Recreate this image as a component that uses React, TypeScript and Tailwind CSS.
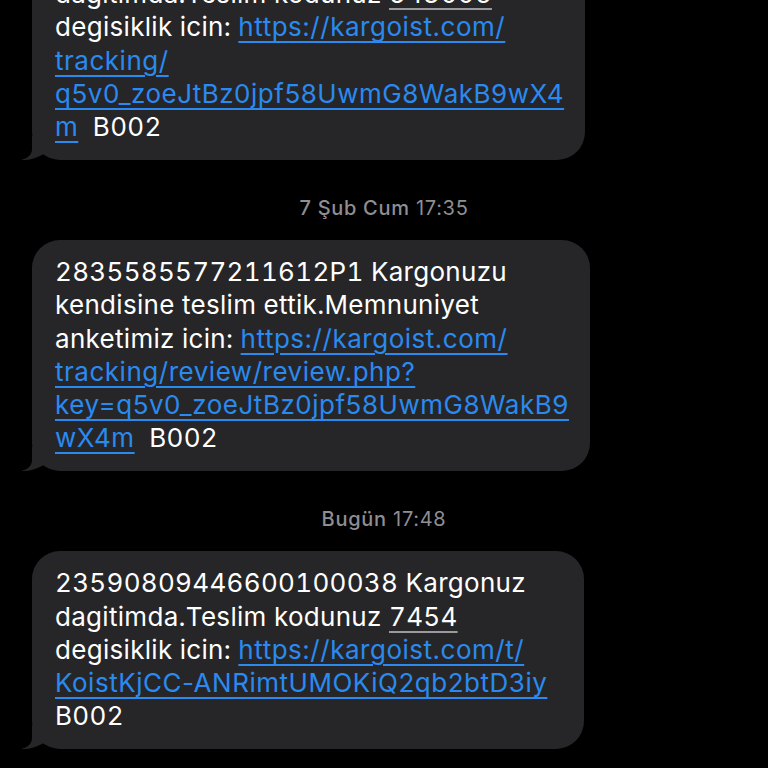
const font = { fontFamily: 'Inter, "Liberation Sans", sans-serif' };

type Seg = { t: string; kind?: 'link' | 'code' };
type Line = Seg[];

const Link = ({ children }: { children: React.ReactNode }) => (
  <span className="tracking-[0.52px] text-[#2a8af0] underline decoration-[#2a8af0] decoration-[2px] underline-offset-[5px]">
    {children}
  </span>
);

const Code = ({ children }: { children: React.ReactNode }) => (
  <span className="tabular-nums underline decoration-[#9a9a9e] decoration-[1.5px] underline-offset-[5px]">{children}</span>
);

function Tail() {
  return (
    <svg
      className="absolute left-[-11px] bottom-0"
      width="34"
      height="24"
      viewBox="0 0 34 24"
      fill="#262628"
    >
      <path d="M11 0 L11 13 C11 18.5 7 22.5 0 24 C8 24.5 15 22 22 18.4 L22 0 Z" />
    </svg>
  );
}

function Bubble({ lines, width, className = '' }: { lines: Line[]; width: string; className?: string }) {
  return (
    <div className={`relative ml-[32px] rounded-[28px] bg-[#262628] pl-[23px] pt-[15px] pb-[17px] ${width} ${className}`}>
      {lines.map((line, i) => (
        <div key={i} className="whitespace-pre text-[26px] leading-[33.2px] text-white tracking-[0.3px]">
          {line.map((s, j) =>
            s.kind === 'link' ? (
              <Link key={j}>{s.t}</Link>
            ) : s.kind === 'code' ? (
              <Code key={j}>{s.t}</Code>
            ) : (
              <span key={j} className="tabular-nums">{s.t}</span>
            )
          )}
        </div>
      ))}
      <Tail />
    </div>
  );
}

function Stamp({ day, time }: { day: string; time: string }) {
  return (
    <div className="mt-[36px] mb-[20px] text-center text-[20px] leading-[24px] tracking-[0.7px] text-[#8e8e93]">
      <span className="font-medium">{day}</span> <span>{time}</span>
    </div>
  );
}

export default function App() {
  return (
    <div className="h-[768px] w-[768px] overflow-hidden bg-black" style={font}>
      <Bubble
        className="-mt-[71px]"
        width="w-[553px]"
        lines={[
          [{ t: '23590809446600100038 Kargonuz' }],
          [{ t: 'dagitimda.Teslim kodunuz ' }, { t: '543006', kind: 'code' }],
          [{ t: 'degisiklik icin: ' }, { t: 'https://kargoist.com/', kind: 'link' }],
          [{ t: 'tracking/', kind: 'link' }],
          [{ t: 'q5v0_zoeJtBz0jpf58UwmG8WakB9wX4', kind: 'link' }],
          [{ t: 'm', kind: 'link' }, { t: '  B002' }],
        ]}
      />
      <Stamp day="7 Şub Cum" time="17:35" />
      <Bubble
        width="w-[558px]"
        lines={[
          [{ t: '2835585577211612P1 Kargonuzu' }],
          [{ t: 'kendisine teslim ettik.Memnuniyet' }],
          [{ t: 'anketimiz icin: ' }, { t: 'https://kargoist.com/', kind: 'link' }],
          [{ t: 'tracking/review/review.php?', kind: 'link' }],
          [{ t: 'key=q5v0_zoeJtBz0jpf58UwmG8WakB9', kind: 'link' }],
          [{ t: 'wX4m', kind: 'link' }, { t: '  B002' }],
        ]}
      />
      <Stamp day="Bugün" time="17:48" />
      <Bubble
        width="w-[552px]"
        lines={[
          [{ t: '23590809446600100038 Kargonuz' }],
          [{ t: 'dagitimda.Teslim kodunuz ' }, { t: '7454', kind: 'code' }],
          [{ t: 'degisiklik icin: ' }, { t: 'https://kargoist.com/t/', kind: 'link' }],
          [{ t: 'KoistKjCC-ANRimtUMOKiQ2qb2btD3iy', kind: 'link' }],
          [{ t: 'B002' }],
        ]}
      />
    </div>
  );
}
